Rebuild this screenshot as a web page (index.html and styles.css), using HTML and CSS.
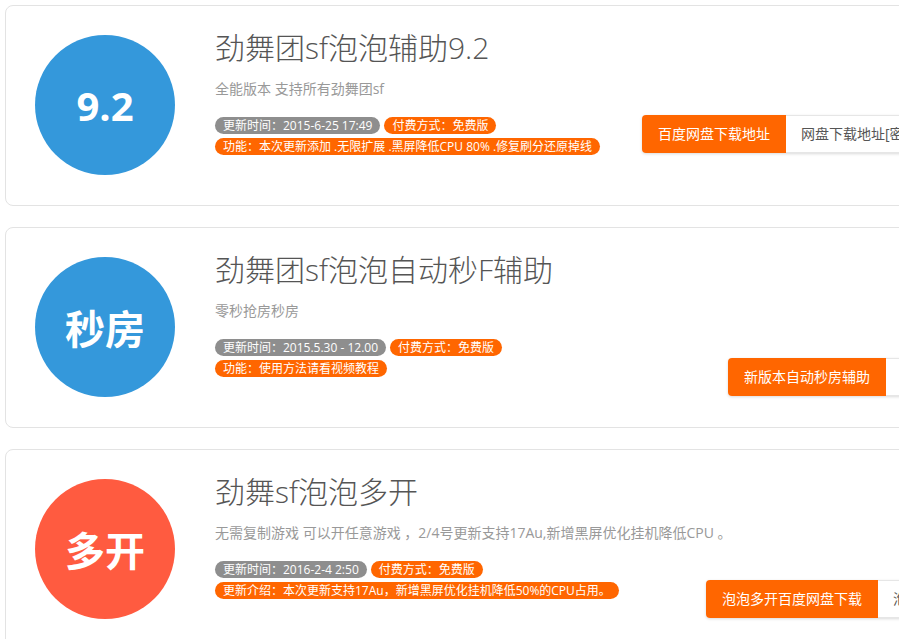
FILE: index.html
```html
<!DOCTYPE html>
<html lang="zh-CN">
<head>
    <meta charset="UTF-8">
    <meta name="viewport" content="width=device-width, initial-scale=1.0">
    <title>劲舞团sf泡泡辅助下载</title>
    <link rel="stylesheet" href="styles.css">
</head>
<body>
    <div class="list">
        <!-- 9.2 辅助 -->
        <div class="card">
            <div class="badge blue">9.2</div>
            <div class="info">
                <h3 class="title">劲舞团sf泡泡辅助9.2</h3>
                <p class="desc">全能版本 支持所有劲舞团sf</p>
                <div class="tags">
                    <span class="tag gray">更新时间：2015-6-25 17:49</span>
                    <span class="tag orange">付费方式：免费版</span>
                </div>
                <div class="tags">
                    <span class="tag orange">功能：本次更新添加 .无限扩展 .黑屏降低CPU 80% .修复刷分还原掉线</span>
                </div>
            </div>
            <div class="actions high">
                <a class="btn main" href="#">百度网盘下载地址</a>
                <a class="btn alt w1" href="#">网盘下载地址[密码：ac8x]</a>
            </div>
        </div>

        <!-- 秒房 -->
        <div class="card">
            <div class="badge blue">秒房</div>
            <div class="info">
                <h3 class="title">劲舞团sf泡泡自动秒F辅助</h3>
                <p class="desc">零秒抢房秒房</p>
                <div class="tags">
                    <span class="tag gray">更新时间：2015.5.30 - 12.00</span>
                    <span class="tag orange">付费方式：免费版</span>
                </div>
                <div class="tags">
                    <span class="tag orange">功能：使用方法请看视频教程</span>
                </div>
            </div>
            <div class="actions">
                <a class="btn main" href="#">新版本自动秒房辅助</a>
                <a class="btn alt w2" href="#">视频教程</a>
            </div>
        </div>

        <!-- 多开 -->
        <div class="card">
            <div class="badge red">多开</div>
            <div class="info">
                <h3 class="title">劲舞sf泡泡多开</h3>
                <p class="desc">无需复制游戏 可以开任意游戏 ，2/4号更新支持17Au,新增黑屏优化挂机降低CPU 。</p>
                <div class="tags">
                    <span class="tag gray">更新时间：2016-2-4 2:50</span>
                    <span class="tag orange">付费方式：免费版</span>
                </div>
                <div class="tags">
                    <span class="tag orange">更新介绍：本次更新支持17Au，新增黑屏优化挂机降低50%的CPU占用。</span>
                </div>
            </div>
            <div class="actions">
                <a class="btn main" href="#">泡泡多开百度网盘下载</a>
                <a class="btn alt w3" href="#">泡泡多开备用下载</a>
            </div>
        </div>
    </div>
</body>
</html>
```

FILE: styles.css
```css
html, body {
    overflow: hidden;
}
body {
    margin: 0;
    font-family: "Open Sans", "Noto Sans CJK SC", "Microsoft YaHei", sans-serif;
    background-color: #fff;
    color: #555;
}
.list {
    padding: 5px;
}
.card {
    display: flex;
    width: 1100px;
    height: 201px;
    box-sizing: border-box;
    padding: 29px;
    margin-bottom: 21px;
    border: 1px solid #e3e3e3;
    border-radius: 8px;
    background-color: #fff;
}
.badge {
    flex: none;
    width: 140px;
    height: 140px;
    border-radius: 50%;
    display: flex;
    align-items: center;
    justify-content: center;
    color: #fff;
    font-size: 40px;
    font-weight: 700;
    margin-right: 40px;
}
.blue {
    background-color: #3498db;
}
.red {
    background-color: #ff5b40;
}
.info {
    flex: 1;
    min-width: 0;
}
.title {
    margin: 0;
    font-size: 30px;
    line-height: 26px;
    font-weight: 300;
    color: #555;
    white-space: nowrap;
}
.desc {
    margin: 18px 0 18px;
    font-size: 14px;
    line-height: 20px;
    color: #999;
    white-space: nowrap;
}
.tags {
    display: flex;
    gap: 4px;
    margin-bottom: 4px;
}
.tag {
    font-size: 12px;
    line-height: 17px;
    padding: 0 8px;
    border-radius: 9px;
    color: #fff;
    white-space: nowrap;
}
.tag.gray {
    background-color: #8e8e8e;
}
.tag.orange {
    background-color: #ff6600;
}
.actions {
    flex: none;
    display: flex;
    align-self: flex-start;
    margin-top: 101px;
    border-radius: 4px;
    box-shadow: 0 1px 3px rgba(0, 0, 0, 0.15);
}
.actions.high {
    margin-top: 80px;
}
.btn {
    display: block;
    height: 38px;
    box-sizing: border-box;
    line-height: 38px;
    font-size: 14px;
    text-decoration: none;
    white-space: nowrap;
}
.btn.main {
    padding: 0 16px;
    background-color: #ff6600;
    color: #fff;
    border-radius: 4px 0 0 4px;
}
.btn.alt {
    padding: 0 15px;
    line-height: 36px;
    border: 1px solid #e6e6e6;
    border-left: none;
    background-color: #fff;
    color: #555;
    overflow: hidden;
}
.w1 {
    width: 289px;
}
.w2 {
    width: 189px;
}
.w3 {
    width: 197px;
}
```
